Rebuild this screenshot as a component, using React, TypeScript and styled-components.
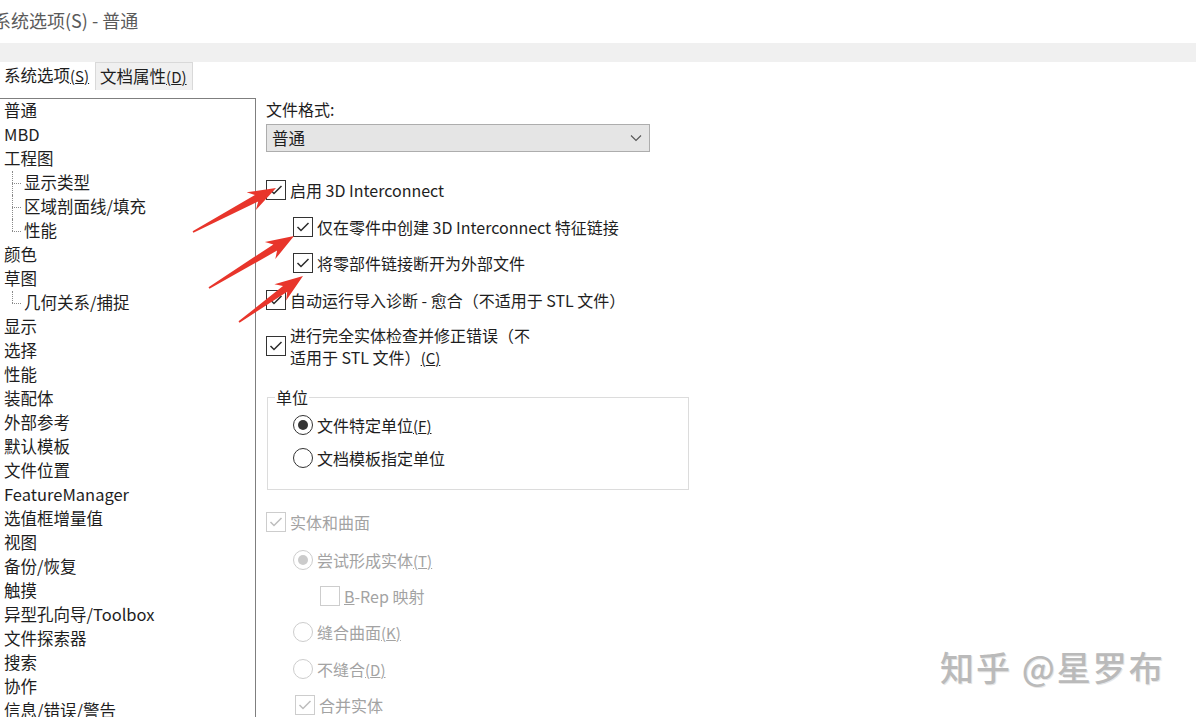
import React from 'react';
import styled, { createGlobalStyle } from 'styled-components';

const Global = createGlobalStyle`
  html, body { margin: 0; padding: 0; background: #fff; overflow: hidden; }
  body { font-family: "Noto Sans CJK SC", "Noto Sans", sans-serif; color: #1e1e1e; }
`;

const Page = styled.div`
  position: relative;
  width: 1196px;
  height: 717px;
  overflow: hidden;
  display: flex;
  flex-direction: column;
  background: #fff;
`;

const TitleBar = styled.div`
  height: 43px;
  flex: none;
  box-sizing: border-box;
  padding-bottom: 3px;
  display: flex;
  align-items: center;
  margin-left: -7px;
  font-size: 18px;
  color: #5a5a5a;
  white-space: nowrap;
`;

const Band = styled.div`
  height: 19px;
  flex: none;
  background: #f0f0f0;
`;

const TabRow = styled.div`
  height: 28px;
  flex: none;
  display: flex;
  align-items: stretch;
`;

const Tab = styled.div<{ $active?: boolean }>`
  box-sizing: border-box;
  padding: 0 ${(p) => (p.$active ? 6 : 5)}px 0 4px;
  line-height: 27px;
  font-size: 16.5px;
  white-space: nowrap;
  background: ${(p) => (p.$active ? '#fff' : '#f0f0f0')};
  border: ${(p) => (p.$active ? 'none' : '1px solid #d9d9d9')};
  border-bottom: none;
  color: #1e1e1e;
`;

const Key = styled.u`
  font-size: 15px;
`;

const Spacer = styled.div`
  height: 8px;
  flex: none;
`;

const Main = styled.div`
  flex: 1;
  display: flex;
  min-height: 0;
`;

const Tree = styled.div`
  width: 257px;
  margin-left: -1px;
  box-sizing: border-box;
  border-top: 1px solid #7f7f7f;
  border-right: 1px solid #7f7f7f;
  display: flex;
  flex-direction: column;
  flex: none;
  overflow: hidden;
`;

const TreeItem = styled.div<{ $sub?: boolean; $last?: boolean }>`
  position: relative;
  flex: none;
  height: 24px;
  line-height: 23px;
  font-size: 16.5px;
  white-space: nowrap;
  padding-left: ${(p) => (p.$sub ? 25 : 5)}px;
  color: #1e1e1e;
  &::before {
    content: '';
    display: ${(p) => (p.$sub ? 'block' : 'none')};
    position: absolute;
    left: 13px;
    top: 12px;
    width: 9px;
    border-top: 1px dotted #8a8a8a;
  }
  &::after {
    content: '';
    display: ${(p) => (p.$sub ? 'block' : 'none')};
    position: absolute;
    left: 13px;
    top: 0;
    height: ${(p) => (p.$last ? 12 : 24)}px;
    border-left: 1px dotted #8a8a8a;
  }
`;

const Content = styled.div`
  flex: 1;
  padding-left: 10px;
  display: flex;
  flex-direction: column;
  overflow: hidden;
`;

const Label = styled.div`
  flex: none;
  height: 22px;
  line-height: 22px;
  font-size: 16px;
`;

const Select = styled.div`
  flex: none;
  margin-top: 4px;
  width: 384px;
  height: 28px;
  box-sizing: border-box;
  border: 1px solid #adadad;
  background: #e5e5e5;
  display: flex;
  align-items: center;
  justify-content: space-between;
  padding: 0 7px 0 5px;
  font-size: 16.5px;
`;

const Row = styled.div<{ $indent?: number; $mt?: number; $h?: number; $disabled?: boolean }>`
  flex: none;
  display: flex;
  align-items: center;
  gap: 4px;
  margin-left: ${(p) => p.$indent ?? 0}px;
  margin-top: ${(p) => p.$mt ?? 0}px;
  height: ${(p) => p.$h ?? 24}px;
  font-size: 16px;
  line-height: 22px;
  white-space: nowrap;
  color: ${(p) => (p.$disabled ? '#a3a3a3' : '#1e1e1e')};
`;

const Box = styled.span<{ $disabled?: boolean }>`
  width: 20px;
  height: 20px;
  box-sizing: border-box;
  flex: none;
  border: 1px solid ${(p) => (p.$disabled ? '#cdcdcd' : '#333')};
  background: #fff;
  display: flex;
  align-items: center;
  justify-content: center;
`;

const Radio = styled.span<{ $disabled?: boolean; $on?: boolean }>`
  width: 20px;
  height: 20px;
  box-sizing: border-box;
  flex: none;
  border-radius: 50%;
  border: 1px solid ${(p) => (p.$disabled ? '#cdcdcd' : '#333')};
  background: #fff;
  display: flex;
  align-items: center;
  justify-content: center;
  &::after {
    content: '';
    display: ${(p) => (p.$on ? 'block' : 'none')};
    width: 10px;
    height: 10px;
    border-radius: 50%;
    background: ${(p) => (p.$disabled ? '#cbcbcb' : '#333')};
  }
`;

const Group = styled.fieldset`
  flex: none;
  margin: 18px 0 0 1px;
  padding: 0 0 19px 0;
  width: 422px;
  box-sizing: border-box;
  border: 1px solid #dcdcdc;
  display: flex;
  flex-direction: column;
`;

const Legend = styled.legend`
  margin-left: 7px;
  padding: 0 1px;
  font-size: 16px;
  line-height: 22px;
  color: #1e1e1e;
`;

const Watermark = styled.div`
  position: absolute;
  left: 940px;
  top: 642px;
  font-size: 34px;
  font-weight: 500;
  letter-spacing: 2px;
  color: #bababa;
  text-shadow: 1px 1px 0 #e6e6e6;
  white-space: nowrap;
`;

const Overlay = styled.svg`
  position: absolute;
  left: 0;
  top: 0;
  pointer-events: none;
`;

const Check = ({ disabled }: { disabled?: boolean }) => (
  <svg width="18" height="18" viewBox="0 0 18 18">
    <polyline
      points="3.5,9 7,12.5 14.5,5"
      fill="none"
      stroke={disabled ? '#bdbdbd' : '#2a2a2a'}
      strokeWidth="1.5"
    />
  </svg>
);

const CheckBox = ({ checked, disabled }: { checked?: boolean; disabled?: boolean }) => (
  <Box $disabled={disabled}>{checked && <Check disabled={disabled} />}</Box>
);

function arrowPoints(x1: number, y1: number, x2: number, y2: number) {
  const dx = x2 - x1;
  const dy = y2 - y1;
  const L = Math.hypot(dx, dy);
  const ux = dx / L;
  const uy = dy / L;
  const nx = -uy;
  const ny = ux;
  const head = 22;
  const bx = x2 - ux * head;
  const by = y2 - uy * head;
  const barbX = x2 - ux * (head + 6);
  const barbY = y2 - uy * (head + 6);
  const pts = [
    [x1 + nx * 0.9, y1 + ny * 0.9],
    [bx + nx * 3.6, by + ny * 3.6],
    [barbX + nx * 10, barbY + ny * 10],
    [x2, y2],
    [barbX - nx * 10, barbY - ny * 10],
    [bx - nx * 3.6, by - ny * 3.6],
    [x1 - nx * 0.9, y1 - ny * 0.9],
  ];
  return pts.map((p) => p.map((v) => v.toFixed(1)).join(',')).join(' ');
}

const treeItems: { t: string; sub?: boolean; last?: boolean }[] = [
  { t: '普通' },
  { t: 'MBD' },
  { t: '工程图' },
  { t: '显示类型', sub: true },
  { t: '区域剖面线/填充', sub: true },
  { t: '性能', sub: true, last: true },
  { t: '颜色' },
  { t: '草图' },
  { t: '几何关系/捕捉', sub: true, last: true },
  { t: '显示' },
  { t: '选择' },
  { t: '性能' },
  { t: '装配体' },
  { t: '外部参考' },
  { t: '默认模板' },
  { t: '文件位置' },
  { t: 'FeatureManager' },
  { t: '选值框增量值' },
  { t: '视图' },
  { t: '备份/恢复' },
  { t: '触摸' },
  { t: '异型孔向导/Toolbox' },
  { t: '文件探索器' },
  { t: '搜索' },
  { t: '协作' },
  { t: '信息/错误/警告' },
];

export default function App() {
  return (
    <Page>
      <Global />
      <TitleBar>系统选项(S) - 普通</TitleBar>
      <Band />
      <TabRow>
        <Tab $active>
          系统选项<Key>(</Key><Key>S</Key><Key>)</Key>
        </Tab>
        <Tab>
          文档属性<Key>(</Key><Key>D</Key><Key>)</Key>
        </Tab>
      </TabRow>
      <Spacer />
      <Main>
        <Tree>
          {treeItems.map((it, i) => (
            <TreeItem key={i} $sub={it.sub} $last={it.last}>
              {it.t}
            </TreeItem>
          ))}
        </Tree>
        <Content>
          <Label>文件格式:</Label>
          <Select>
            <span>普通</span>
            <svg width="12" height="8" viewBox="0 0 12 8">
              <polyline points="1,1.5 6,6.5 11,1.5" fill="none" stroke="#555" strokeWidth="1.1" />
            </svg>
          </Select>

          <Row $mt={26}>
            <CheckBox checked />
            <span>启用 3D Interconnect</span>
          </Row>
          <Row $mt={13} $indent={27}>
            <CheckBox checked />
            <span>仅在零件中创建 3D Interconnect 特征链接</span>
          </Row>
          <Row $mt={12} $indent={27}>
            <CheckBox checked />
            <span>将零部件链接断开为外部文件</span>
          </Row>
          <Row $mt={13}>
            <CheckBox checked />
            <span>自动运行导入诊断 - 愈合（不适用于 STL 文件）</span>
          </Row>
          <Row $mt={12} $h={44}>
            <CheckBox checked />
            <span>
              进行完全实体检查并修正错误（不
              <br />
              适用于 STL 文件）<Key>(</Key><Key>C</Key><Key>)</Key>
            </span>
          </Row>

          <Group>
            <Legend>单位</Legend>
            <Row $mt={5} $indent={25}>
              <Radio $on />
              <span>
                文件特定单位<Key>(</Key><Key>F</Key><Key>)</Key>
              </span>
            </Row>
            <Row $mt={9} $indent={25}>
              <Radio />
              <span>文档模板指定单位</span>
            </Row>
          </Group>

          <Row $mt={20} $disabled>
            <CheckBox checked disabled />
            <span>实体和曲面</span>
          </Row>
          <Row $mt={14} $indent={27} $disabled>
            <Radio $on $disabled />
            <span>
              尝试形成实体<Key>(</Key><Key>T</Key><Key>)</Key>
            </span>
          </Row>
          <Row $mt={12} $indent={54} $disabled>
            <CheckBox disabled />
            <span>
              <u>B</u>-Rep 映射
            </span>
          </Row>
          <Row $mt={12} $indent={27} $disabled>
            <Radio $disabled />
            <span>
              缝合曲面<Key>(</Key><Key>K</Key><Key>)</Key>
            </span>
          </Row>
          <Row $mt={13} $indent={27} $disabled>
            <Radio $disabled />
            <span>
              不缝合<Key>(</Key><Key>D</Key><Key>)</Key>
            </span>
          </Row>
          <Row $mt={12} $indent={29} $disabled>
            <CheckBox checked disabled />
            <span>合并实体</span>
          </Row>
        </Content>
      </Main>

      <Overlay width="1196" height="717" viewBox="0 0 1196 717">
        <polygon points={arrowPoints(193, 232, 276, 188)} fill="#e8352b" />
        <polygon points={arrowPoints(209, 288, 294, 236)} fill="#e8352b" />
        <polygon points={arrowPoints(239, 322, 303, 276)} fill="#e8352b" />
      </Overlay>
      <Watermark>知乎 @星罗布</Watermark>
    </Page>
  );
}
